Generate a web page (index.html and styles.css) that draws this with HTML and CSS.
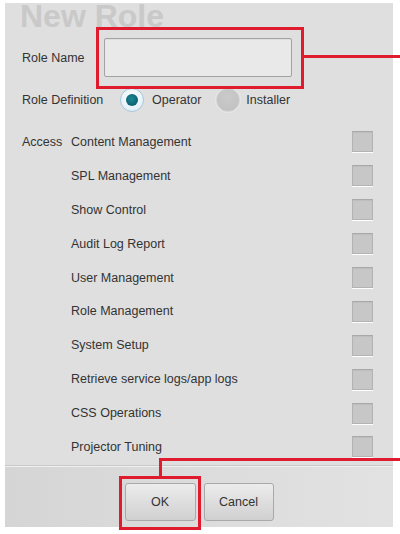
FILE: index.html
```html
<!DOCTYPE html>
<html>
<head>
<meta charset="utf-8">
<link rel="stylesheet" href="styles.css">
</head>
<body>
<div class="dialog">
  <h1 class="title">New Role</h1>
  <div class="form">
    <div class="name-row">
      <span class="lbl lbl-name">Role Name</span>
      <div class="input"></div>
    </div>
    <div class="def-row">
      <span class="lbl lbl-def">Role Definition</span>
      <span class="radio on"><span class="dot"></span></span>
      <span class="rtext">Operator</span>
      <span class="radio off"></span>
      <span class="rtext rtext-2">Installer</span>
    </div>
    <div class="access">
      <div class="access-label">Access</div>
      <ul class="perm-list">
        <li class="perm"><span>Content Management</span><span class="check"></span></li>
        <li class="perm"><span>SPL Management</span><span class="check"></span></li>
        <li class="perm"><span>Show Control</span><span class="check"></span></li>
        <li class="perm"><span>Audit Log Report</span><span class="check"></span></li>
        <li class="perm"><span>User Management</span><span class="check"></span></li>
        <li class="perm"><span>Role Management</span><span class="check"></span></li>
        <li class="perm"><span>System Setup</span><span class="check"></span></li>
        <li class="perm"><span>Retrieve service logs/app logs</span><span class="check"></span></li>
        <li class="perm"><span>CSS Operations</span><span class="check"></span></li>
        <li class="perm"><span>Projector Tuning</span><span class="check"></span></li>
      </ul>
    </div>
  </div>
  <div class="footer">
    <button class="btn btn-ok">OK</button>
    <button class="btn btn-cancel">Cancel</button>
  </div>
</div>
<div class="annot box1"></div>
<div class="annot line1"></div>
<div class="annot box2"></div>
<div class="annot line2v"></div>
<div class="annot line2h"></div>
</body>
</html>
```
FILE: styles.css
```css
html, body {
  margin: 0;
  padding: 0;
  background: #ffffff;
  width: 400px;
  height: 534px;
  overflow: hidden;
  position: relative;
  font-family: "Liberation Sans", Arial, sans-serif;
}
.dialog {
  margin: 3px 0 0 5px;
  width: 388px;
  height: 524px;
  background: #dfdfdf;
  display: flex;
  flex-direction: column;
}
.title {
  margin: 0;
  padding-left: 15px;
  font-size: 32px;
  line-height: 26px;
  font-weight: bold;
  color: #c9c9c9;
}
.form {
  padding: 9px 20px 0 17px;
  font-size: 12.5px;
  color: #333;
  flex: 1;
}
.lbl {
  display: block;
}
.name-row {
  display: flex;
  align-items: center;
  height: 39px;
}
.lbl-name {
  width: 82px;
}
.input {
  width: 186px;
  height: 37px;
  border: 1px solid #a3a3a3;
  border-radius: 2px;
  background: #e9e9e9;
  box-shadow: inset 0 1px 1px rgba(0,0,0,0.06);
}
.def-row {
  display: flex;
  align-items: center;
  height: 24px;
  margin-top: 11px;
}
.lbl-def {
  width: 98px;
}
.radio {
  width: 24px;
  height: 24px;
  border-radius: 50%;
  box-sizing: border-box;
  display: flex;
  align-items: center;
  justify-content: center;
}
.radio.on {
  background: radial-gradient(circle at 50% 40%, #ffffff 0%, #e9f3f9 60%, #cfe3ef 100%);
  border: 1px solid #a9c8db;
}
.radio.on .dot {
  width: 12px;
  height: 12px;
  border-radius: 50%;
  background: radial-gradient(circle at 45% 40%, #1c8797 0%, #0a5d6b 80%);
}
.radio.off {
  background: radial-gradient(circle at 50% 35%, #cacaca 0%, #c3c3c3 70%, #bababa 100%);
  border: 1px solid #d6d6d6;
  box-shadow: 0 0 0 1px #e6e6e6;
  margin-left: 15px;
}
.rtext {
  margin-left: 8px;
}
.rtext-2 {
  margin-left: 6px;
}
.access {
  display: flex;
  margin-top: 13px;
}
.access-label {
  width: 49px;
  height: 34px;
  line-height: 34px;
}
.perm-list {
  list-style: none;
  margin: 0;
  padding: 0;
  flex: 1;
}
.perm {
  height: 33.9px;
  display: flex;
  align-items: center;
  justify-content: space-between;
}
.check {
  width: 21px;
  height: 21px;
  box-sizing: border-box;
  background: #c7c7c7;
  border: 1px solid #b3b3b3;
  border-top-color: #a9a9a9;
  box-shadow: 0 1px 0 #ffffff, inset 0 1px 1px rgba(0,0,0,0.05);
}
.footer {
  margin-top: 2px;
  height: 61px;
  box-sizing: border-box;
  border-top: 1px solid #f0f0f0;
  box-shadow: 0 -1px 0 #c9c9c9;
  background: linear-gradient(to right, #d5d5d5, #dcdcdc 50%, #e2e2e2);
  display: flex;
  justify-content: center;
  align-items: flex-start;
  gap: 8px;
  padding-top: 16px;
}
.btn {
  height: 38px;
  border: 1px solid #a9a9a9;
  border-radius: 3px;
  background: linear-gradient(#ececec, #d0d0d0);
  font-family: "Liberation Sans", Arial, sans-serif;
  font-size: 12.5px;
  color: #333;
  padding: 0;
  margin: 0;
}
.btn-ok { width: 71px; }
.btn-cancel { width: 70px; }
.annot {
  position: absolute;
  box-sizing: border-box;
}
.box1 {
  left: 96px;
  top: 27px;
  width: 208px;
  height: 62px;
  border: 3px solid #e11b2e;
}
.line1 {
  left: 303px;
  top: 55px;
  width: 97px;
  height: 3px;
  background: #e11b2e;
}
.box2 {
  left: 119px;
  top: 476px;
  width: 82px;
  height: 54px;
  border: 3px solid #e11b2e;
}
.line2v {
  left: 159px;
  top: 458px;
  width: 3px;
  height: 19px;
  background: #e11b2e;
}
.line2h {
  left: 159px;
  top: 458px;
  width: 241px;
  height: 3px;
  background: #e11b2e;
}
```
